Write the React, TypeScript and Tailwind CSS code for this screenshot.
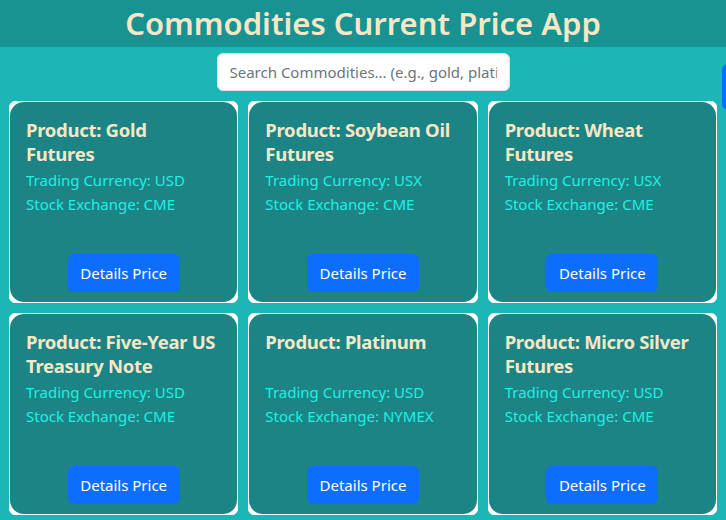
import { useState } from "react";

const commodities = [
  { name: "Gold Futures", currency: "USD", exchange: "CME" },
  { name: "Soybean Oil Futures", currency: "USX", exchange: "CME" },
  { name: "Wheat Futures", currency: "USX", exchange: "CME" },
  { name: "Five-Year US Treasury Note", currency: "USD", exchange: "CME" },
  { name: "Platinum", currency: "USD", exchange: "NYMEX" },
  { name: "Micro Silver Futures", currency: "USD", exchange: "CME" },
];

export default function App() {
  const [query, setQuery] = useState("");

  const filtered = commodities.filter((c) =>
    c.name.toLowerCase().includes(query.toLowerCase())
  );

  return (
    <main
      className="min-h-screen bg-[#1bb7b7] relative overflow-hidden"
      style={{ fontFamily: '"Noto Sans", "Open Sans", sans-serif' }}
    >
      {/* HEADER */}
      <header className="bg-[#199292] h-[47px] flex items-center justify-center">
        <h1 className="text-[31px] font-semibold text-[#f6e7c6] leading-none">
          Commodities Current Price App
        </h1>
      </header>

      {/* SEARCH */}
      <div className="flex justify-center pt-[6px] pb-[10px]">
        <input
          type="text"
          value={query}
          onChange={(e) => setQuery(e.target.value)}
          placeholder="Search Commodities... (e.g., gold, platinum)"
          className="w-[293px] h-[38px] bg-white rounded-md border border-[#dee2e6] px-3 text-[15px] text-[#333] placeholder:text-[#6c757d] outline-none"
        />
      </div>

      {/* side button peeking */}
      <div className="absolute right-[-20px] top-[64px] w-[24px] h-[46px] bg-[#0d6efd] rounded-md" />

      {/* LIST */}
      <div className="grid grid-cols-3 gap-[10px] px-[9px]">
        {filtered.map((item) => (
          <div
            key={item.name}
            className="bg-white rounded-[6px] border border-white"
          >
            <div className="bg-[#1c8484] rounded-[14px] h-[200px] px-4 pt-[16px] pb-[10px] flex flex-col">
              <h2 className="max-w-[191px] text-[18.5px] font-bold tracking-[-0.3px] text-[#f6e7c6] leading-6 min-h-[48px]">
                Product: {item.name}
              </h2>

              <p className="text-[#1ff0e4] text-[15px] leading-6 mt-[2px]">
                Trading Currency: {item.currency}
              </p>

              <p className="text-[#1ff0e4] text-[15px] leading-6">
                Stock Exchange: {item.exchange}
              </p>

              <div className="mt-auto flex justify-center">
                <button className="bg-[#0d6efd] text-white rounded-md w-[112px] h-[38px] text-[15px]">
                  Details Price
                </button>
              </div>
            </div>
          </div>
        ))}
      </div>
    </main>
  );
}
